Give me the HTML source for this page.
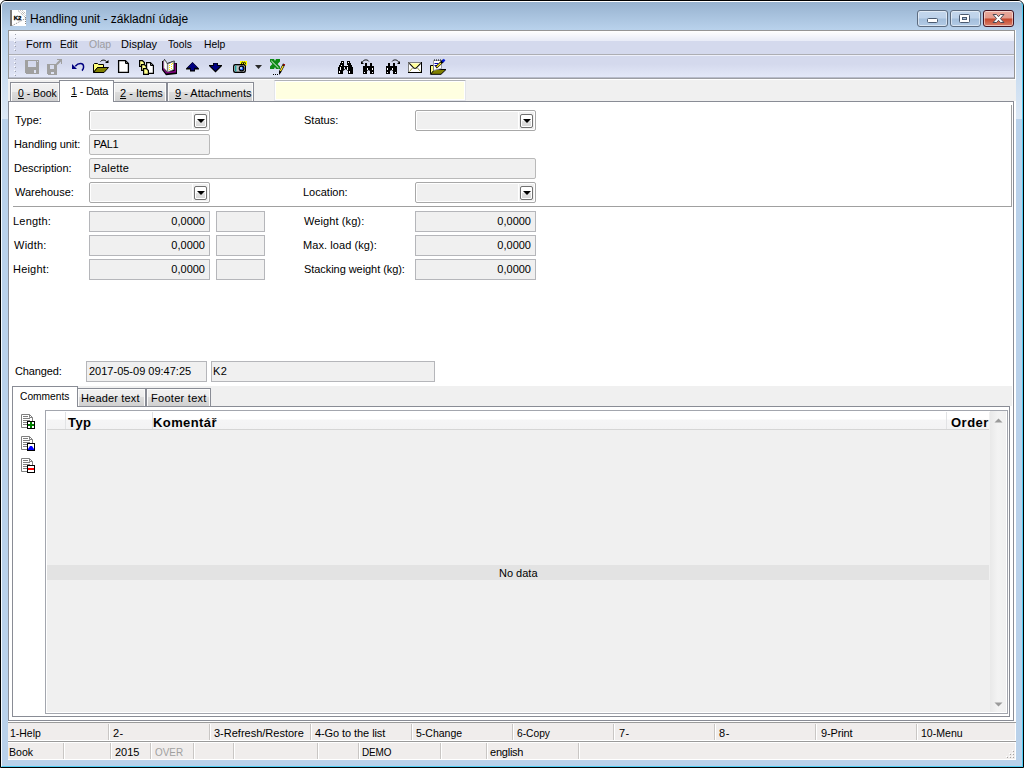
<!DOCTYPE html>
<html lang="en">
<head>
<meta charset="utf-8">
<title>Handling unit - základní údaje</title>
<style>
html,body{margin:0;padding:0;background:#fff;}
body{width:1024px;height:768px;overflow:hidden;position:relative;font-family:"Liberation Sans",sans-serif;font-size:11px;color:#000;}
.a{position:absolute;box-sizing:border-box;}
.t{position:absolute;white-space:nowrap;line-height:13px;height:13px;}
svg{position:absolute;overflow:visible;}
/* window frame */
#win{left:0;top:0;width:1024px;height:768px;background:linear-gradient(#97b2cf 0,#97b2cf 1px,#b9d2ec 29px,#dce8f5 118px,#b9d1ea 118px);border:1px solid #000;border-radius:6px 6px 0 0;}
#cap{left:1px;top:1px;width:1022px;height:29px;background:none;border-radius:5px 5px 0 0;}
#hl{left:1px;top:1px;width:1022px;height:766px;border-top:1px solid #fff;border-left:1px solid #f4f9fd;border-right:1px solid #4fcdf3;border-bottom:1px solid #4fcdf3;border-radius:5px 5px 0 0;}
#title{left:30px;top:12px;font-size:12px;line-height:15px;height:15px;}
/* caption buttons */
.cb{top:10px;width:31px;height:17px;border:1px solid #5d6c80;border-radius:3px;box-shadow:inset 0 0 0 1px rgba(255,255,255,.5);background:linear-gradient(#c3d6ec 0,#bdd2ea 48%,#a3bedb 52%,#b3cbe6 100%);}
#bx{border-color:#431422;background:linear-gradient(#e9a99c 0,#e29a8b 48%,#c5452a 52%,#d8806b 100%);}
/* client */
#client{left:8px;top:30px;width:1008px;height:730px;background:#fff;}
#dock{left:8px;top:30px;width:1007px;height:49px;border:1px solid #959595;border-bottom:none;}
#menu{left:9px;top:31px;width:1005px;height:23px;background:linear-gradient(#fff 0,#e8ebf7 10px,#d4d9ed 10px);}
#mline{left:9px;top:54px;width:1005px;height:1px;background:#adaeb3;}
#tbar{left:9px;top:55px;width:1005px;height:24px;background:linear-gradient(#eef0fa 0,#eef0fa 1px,#d4d9ed 1px,#d4d9ed 9px,#e3e8f8 22px,#b8bccb 22px,#b8bccb 23px,#9c9ea3 23px);}
.mi{top:38px;}
/* tabs */
#strip{left:8px;top:80px;width:1008px;height:21px;background:#f0f0f0;}
.tab{border:1px solid #898c95;border-bottom:none;background:linear-gradient(#f2f2f2 0,#ececec 50%,#dddddd 50%,#d0d0d0 100%);box-shadow:inset 1px 0 #fbfbfb,inset -1px 0 #fbfbfb,inset 0 1px #fbfbfb;}
.tabsel{background:#fff;border:1px solid #898c95;border-bottom:none;}
#page{left:8px;top:101px;width:1006px;height:620px;border:1px solid #898c95;background:#fff;}
/* fields */
.cmb{border:1px solid #a8a8a8;border-radius:2px;background:#fff;height:21px;}
.cmb i{position:absolute;left:1px;top:1px;bottom:1px;right:17px;background:#f0f0f0;}
.cmb b{position:absolute;right:1px;top:1px;bottom:1px;width:15px;background:#f0f0f0;}
.cmb u{position:absolute;right:2px;top:3px;width:13px;height:14px;border:1px solid #707070;border-radius:2px;box-sizing:border-box;background:linear-gradient(#fff 0,#fff 45%,#e3e3e3 50%,#d6d6d6 100%);box-shadow:inset 0 0 0 1px #fff;}
.cmb u:after{content:"";position:absolute;left:2px;top:4px;border-left:4px solid transparent;border-right:4px solid transparent;border-top:4px solid #000;width:0;height:0;}
.ed{border:1px solid #b5b6ba;background:#f0f0f0;height:21px;line-height:19px;padding:0 4px;white-space:nowrap;}
.r{text-align:right;}
.st{background:#f0edec;}
</style>
</head>
<body>
<div id="win" class="a"></div>
<div id="cap" class="a"></div>
<div id="hl" class="a"></div>
<div id="title" class="t">Handling unit - základní údaje</div>
<div id="bm" class="a cb" style="left:917px"></div>
<div id="bo" class="a cb" style="left:950px"></div>
<div id="bx" class="a cb" style="left:983px"></div>
<div id="client" class="a"></div>
<div id="dock" class="a"></div>
<div id="menu" class="a"></div>
<div id="mline" class="a"></div>
<div id="tbar" class="a"></div>
<div class="t mi" style="left:26px">Form</div>
<div class="t mi" style="left:60px;transform:scaleX(0.93);transform-origin:0 0">Edit</div>
<div class="t mi" style="left:89px;color:#9d9da1;transform:scaleX(0.95);transform-origin:0 0">Olap</div>
<div class="t mi" style="left:121px">Display</div>
<div class="t mi" style="left:168px;transform:scaleX(0.93);transform-origin:0 0">Tools</div>
<div class="t mi" style="left:204px;transform:scaleX(0.94);transform-origin:0 0">Help</div>
<!-- TOOLBAR ICONS -->
<svg id="tbicons" style="left:0;top:0" width="1024" height="100" viewBox="0 0 1024 100">
<g id="grip" fill="#fff"><rect x="14" y="33" width="1" height="1"/><rect x="14" y="37" width="1" height="1"/><rect x="14" y="41" width="1" height="1"/><rect x="14" y="45" width="1" height="1"/><rect x="14" y="49" width="1" height="1"/><rect x="14" y="58" width="1" height="1"/><rect x="14" y="62" width="1" height="1"/><rect x="14" y="66" width="1" height="1"/><rect x="14" y="70" width="1" height="1"/><rect x="14" y="74" width="1" height="1"/></g>
<g fill="#9fa1ac"><rect x="15" y="34" width="1" height="1"/><rect x="15" y="38" width="1" height="1"/><rect x="15" y="42" width="1" height="1"/><rect x="15" y="46" width="1" height="1"/><rect x="15" y="50" width="1" height="1"/><rect x="15" y="59" width="1" height="1"/><rect x="15" y="63" width="1" height="1"/><rect x="15" y="67" width="1" height="1"/><rect x="15" y="71" width="1" height="1"/><rect x="15" y="75" width="1" height="1"/></g>
<!-- save (disabled) -->
<path shape-rendering="crispEdges" fill="#a0a0a0" fill-rule="evenodd" d="M25 60H39V74H26L25 73Z M28 61H36V67H28Z M34 70H36V73H34Z M37 61H38V62H37Z"/>
<!-- save as (disabled) -->
<path shape-rendering="crispEdges" fill="#a0a0a0" fill-rule="evenodd" d="M47 64H57V75H48L47 74Z M50 65H54V69H50Z M51 72H54V74H51Z"/>
<path fill="#a0a0a0" d="M57 59H62V64H61V61.5L57.5 65L56 63.5L59.5 60H57Z"/>
<!-- undo -->
<path fill="#000080" d="M72 64L77 69H72Z"/>
<path fill="none" stroke="#000080" stroke-width="1.5" d="M75.3 66.3C77 64.3 78.8 63.6 80.5 63.6C82.6 63.6 83.6 65.2 83.6 67C83.6 68.6 83 69.6 82 70.6"/>
<!-- open -->
<path fill="#ffff7a" stroke="#000" d="M93.5 72.5V64.5L94.5 63.5H97.5L98.5 64.5H103.5V67.5H97.5L93.5 72.5Z"/>
<path fill="#808000" stroke="#000" d="M93.5 72.5L97.5 67.5H108.5L104 72.5Z"/>
<path fill="none" stroke="#000" d="M100.5 61.5C102 59.6 105.5 59.4 107 62.5"/><path fill="#000" d="M105 63H108.5V60Z"/>
<!-- new -->
<path fill="#fff" stroke="#000" stroke-width="1.3" d="M118.6 60.6H125.4L128.4 63.6V72.4H118.6Z"/><path fill="none" stroke="#000" d="M125.5 60.5V63.5H128.5"/>
<!-- copy -->
<path fill="#fff" stroke="#000" stroke-width="1.2" d="M146.6 62.6H150.4L153.4 65.6V73.4H146.6Z"/><path fill="none" stroke="#000" d="M150.5 62.5V65.5H153.5"/>
<path fill="#ffff8c" stroke="#000" stroke-width="1.2" d="M139.6 60.6H142.4L144.4 62.6V66.4H139.6Z"/>
<path fill="#ffff8c" stroke="#000" stroke-width="1.2" d="M141.6 64.6H144.4L146.4 66.6V70.4H141.6Z"/>
<path fill="#ffff8c" stroke="#000" stroke-width="1.2" d="M143.6 68.6H146.4L148.4 70.6V74.4H143.6Z"/>
<!-- book -->
<path fill="#000" d="M162 61H163.2L164.6 59L167.4 63L173.4 60.8H174.6V63H177V74L166 75.2L162 70Z"/>
<path fill="#800080" d="M163 61.6V69.2L166.2 73.4L176 72.4V63.6H174.6V71L166.6 72L164 68.6V61.6Z"/>
<path fill="#fff" stroke="#8c8c8c" stroke-width=".7" d="M163.8 61.4L164.7 60L167.3 64V71.8L163.8 68Z"/>
<path fill="#fff" stroke="#8c8c8c" stroke-width=".7" d="M167.9 63.9L173.6 61.6V69.6L167.9 71.8Z"/>
<g fill="#ffe800"><rect x="169" y="65" width="1" height="1"/><rect x="171" y="64" width="1" height="1"/><rect x="169" y="67" width="1" height="1"/><rect x="171" y="66" width="1" height="1"/><rect x="169" y="69" width="1" height="1"/><rect x="171" y="68" width="1" height="1"/><rect x="172" y="63" width="1" height="1"/></g>
<!-- up -->
<path fill="#000" d="M192.5 62L199 68.5V69.5H195V71.5H190V69.5H186V68.5Z"/><path fill="#000080" d="M192.5 62.6L197.6 67.8H194.2V70.3H190.8V67.8H187.4Z"/>
<!-- down -->
<path fill="#000" d="M213 63H218V65H222V66L215.5 72.4L209 66V65H213Z"/><path fill="#000080" d="M213.8 63.6H217.2V66H220.3L215.5 70.8L210.7 66H213.8Z"/>
<!-- camera -->
<rect x="240" y="61" width="7" height="4.5" fill="#ffff00"/><path stroke="#000" fill="none" d="M241.5 64C241.5 61.5 243.5 61.5 243.5 64M243.5 64C243.5 61.5 245.5 61.5 245.5 64"/>
<rect x="233.7" y="64.7" width="11.6" height="7.6" rx="1.5" fill="#fff" stroke="#000" stroke-width="1.4"/><rect x="235" y="65.5" width="1.6" height="6" fill="#1d9a9a"/><rect x="237" y="66" width="2" height="5" fill="#bdbdbd"/>
<circle cx="241.6" cy="68.5" r="2.3" fill="#1a5cff" stroke="#000" stroke-width="1.2"/><circle cx="241" cy="67.9" r="1" fill="#dff6ff"/>
<!-- dropdown -->
<path fill="#2a2a2a" d="M255 65H262L258.5 69Z"/>
<!-- excel + pencil -->
<path fill="#0d8a16" d="M270 59H274L275 61L276 59H280V61.5L277.6 64L280 66.5V69H276L275 67L274 69H270V66.5L272.4 64L270 61.5Z"/><path stroke="#fff" stroke-width=".9" d="M271.3 60.8L278.6 68"/>
<path fill="#000" d="M283 63.5L285.2 64.6L281 72.5L279 75V71.3Z"/><path stroke="#ffe920" stroke-width="1.3" d="M283.2 65.8L280.4 71"/><rect x="283.4" y="64" width="1.4" height="1.3" fill="#d00000"/>
<g fill="#000"><rect x="273" y="74" width="1" height="1"/><rect x="275" y="74" width="1" height="1"/><rect x="277" y="74" width="1" height="1"/></g>
<!-- binoculars 1 -->
<path fill="#000" d="M341 61H344V63H345V66H346V61H347V63H347V61H350V63H351V65H352V67H353V74H348V71L345.5 69L343 71V74H338V67H339V65H340V63H341Z"/>
<g fill="#fff"><rect x="342" y="62" width="1" height="1"/><rect x="348" y="62" width="1" height="1"/><rect x="341" y="65" width="1" height="1"/><rect x="347" y="65" width="1" height="1"/><rect x="340" y="67" width="1" height="3"/><rect x="347" y="67" width="1" height="3"/><rect x="344" y="67" width="1" height="2" fill="#d9ddf0"/><rect x="339" y="71" width="1" height="2"/><rect x="349" y="71" width="1" height="2"/></g>
<rect x="344" y="61" width="3" height="5" fill="#d6dbee"/>
<!-- binoculars 2 -->
<path fill="#000" d="M365 63H367V66H370V63H372V66H374V74H370V71L368.5 70L367 71V74H363V66H365Z"/>
<g fill="#fff"><rect x="367" y="68" width="1" height="2"/><rect x="372" y="68" width="1" height="2"/><rect x="364" y="72" width="1" height="1"/><rect x="372" y="72" width="1" height="1"/></g>
<path fill="none" stroke="#000" d="M362.3 62.5C363 59.4 367.6 59.2 368.8 61.4"/><path fill="#000" d="M361 61V64H364Z"/>
<!-- binoculars 3 -->
<path fill="#000" d="M388 63H390V66H393V63H395V66H397V74H393V71L391.5 70L390 71V74H386V66H388Z"/>
<g fill="#fff"><rect x="387" y="68" width="1" height="2"/><rect x="392" y="68" width="1" height="2"/><rect x="387" y="72" width="1" height="1"/><rect x="395" y="72" width="1" height="1"/></g>
<path fill="none" stroke="#000" d="M392.2 61.4C393.4 59.2 398 59.4 398.7 62.5"/><path fill="#000" d="M400 61V64H397Z"/>
<!-- envelope -->
<rect x="408.5" y="62.5" width="13" height="10" fill="#fff" stroke="#000"/><path fill="none" stroke="#808080" d="M408.5 72V62.5H421"/>
<path fill="#ffff9a" d="M409.5 63.5H420.5L415 68.8Z"/><path fill="none" stroke="#000" stroke-width="1.1" d="M409.3 63.3L414 68.3H416L420.7 63.3"/><path fill="none" stroke="#808000" stroke-width=".8" d="M409.5 71.5L412.5 68M420.5 71.5L417.5 68"/>
<!-- note -->
<path fill="#ffff8a" stroke="#000" d="M430.5 73.5V65.5H433.5V73.5Z"/><path fill="#808000" stroke="#000" d="M430.5 74.3L434.5 69.5H446L441 74.3Z"/>
<path fill="#fff" stroke="#8a8a8a" stroke-width=".8" d="M433.5 60.5H441.5V68.5L433.5 70.5Z"/><path stroke="#000" stroke-dasharray="1 1" d="M434 60H442"/><path stroke="#0000b0" d="M434.5 63.5H438M434.5 65.5H437"/>
<path stroke="#000" stroke-width="2.6" d="M443.5 60.5L436 67.5"/><path stroke="#ffea20" stroke-width="1.2" d="M441 63L436.6 67"/><path stroke="#0018d8" stroke-width="2.2" d="M444.6 59.6L442.4 61.8"/>
</svg>
<!-- TABS -->
<div id="strip" class="a"></div>
<div id="page" class="a"></div>
<div class="a tab" style="left:10px;top:82px;width:50px;height:19px"></div>
<div class="a tab" style="left:113px;top:82px;width:54px;height:19px"></div>
<div class="a tab" style="left:167px;top:82px;width:87px;height:19px"></div>
<div class="a tabsel" style="left:59px;top:80px;width:55px;height:22px"></div>
<div class="t" style="left:18px;top:87px;transform:scaleX(.945);transform-origin:0 0"><u>0</u> - Book</div>
<div class="t" style="left:71px;top:85px;letter-spacing:-0.25px"><u>1</u> - Data</div>
<div class="t" style="left:120px;top:87px"><u>2</u> - Items</div>
<div class="t" style="left:175px;top:87px"><u>9</u> - Attachments</div>
<div class="a" style="left:274px;top:80px;width:192px;height:21px;border:1px solid #e3e5ea;border-top-color:#b0b2b8;background:#ffffe1;box-shadow:inset 0 0 0 1px #fff;border-radius:1px"></div>
<!-- FORM -->
<div class="a" style="left:13px;top:105px;width:999px;height:102px;border-right:1px solid #a0a0a0;border-bottom:1px solid #a0a0a0"></div>
<div class="t" style="left:15px;top:114px">Type:</div>
<div class="t" style="left:14px;top:138px;letter-spacing:-0.08px">Handling unit:</div>
<div class="t" style="left:14px;top:162px;letter-spacing:-0.05px">Description:</div>
<div class="t" style="left:15px;top:186px">Warehouse:</div>
<div class="t" style="left:13px;top:215px;letter-spacing:0.2px">Length:</div>
<div class="t" style="left:14px;top:239px;letter-spacing:0.25px">Width:</div>
<div class="t" style="left:13px;top:263px;letter-spacing:0.2px">Height:</div>
<div class="t" style="left:304px;top:114px">Status:</div>
<div class="t" style="left:303px;top:186px">Location:</div>
<div class="t" style="left:304px;top:215px;letter-spacing:0.1px">Weight (kg):</div>
<div class="t" style="left:303px;top:239px;letter-spacing:0.07px">Max. load (kg):</div>
<div class="t" style="left:304px;top:263px;letter-spacing:-0.06px">Stacking weight (kg):</div>
<div class="t" style="left:15px;top:365px;letter-spacing:-0.14px">Changed:</div>
<div class="a cmb" style="left:89px;top:110px;width:121px"><i></i><b></b><u></u></div>
<div class="a cmb" style="left:415px;top:110px;width:121px"><i></i><b></b><u></u></div>
<div class="a cmb" style="left:89px;top:182px;width:121px"><i></i><b></b><u></u></div>
<div class="a cmb" style="left:415px;top:182px;width:121px"><i></i><b></b><u></u></div>
<div class="a ed" style="left:89px;top:134px;width:121px;border-radius:2px;border-color:#b9b9b9;padding-left:3.5px;letter-spacing:-0.3px">PAL1</div>
<div class="a ed" style="left:89px;top:158px;width:447px;border-radius:2px;border-color:#b9b9b9;padding-left:3.5px;letter-spacing:0.17px">Palette</div>
<div class="a ed r" style="left:89px;top:211px;width:121px">0,0000</div>
<div class="a ed r" style="left:89px;top:235px;width:121px">0,0000</div>
<div class="a ed r" style="left:89px;top:259px;width:121px">0,0000</div>
<div class="a ed" style="left:216px;top:211px;width:49px"></div>
<div class="a ed" style="left:216px;top:235px;width:49px"></div>
<div class="a ed" style="left:216px;top:259px;width:49px"></div>
<div class="a ed r" style="left:415px;top:211px;width:121px">0,0000</div>
<div class="a ed r" style="left:415px;top:235px;width:121px">0,0000</div>
<div class="a ed r" style="left:415px;top:259px;width:121px">0,0000</div>
<div class="a ed" style="left:86px;top:361px;width:121px;padding:0 2px">2017-05-09 09:47:25</div>
<div class="a ed" style="left:211px;top:361px;width:224px;padding:0 1px;letter-spacing:0.4px">K2</div>
<!-- INNER TABS -->
<div class="a" style="left:12px;top:386px;width:1000px;height:20px;background:#f0f0f0"></div>
<div class="a" style="left:12px;top:406px;width:998px;height:311px;border:1px solid #898c95;background:#fff"></div>
<div class="a tab" style="left:77px;top:388px;width:69px;height:18px"></div>
<div class="a tab" style="left:146px;top:388px;width:65px;height:18px"></div>
<div class="a tabsel" style="left:12px;top:386px;width:66px;height:21px"></div>
<div class="t" style="left:20px;top:390px;transform:scaleX(0.93);transform-origin:0 0">Comments</div>
<div class="t" style="left:81px;top:392px;letter-spacing:0.17px">Header text</div>
<div class="t" style="left:151px;top:392px;letter-spacing:0.28px">Footer text</div>
<!-- GRID -->
<div class="a" style="left:45px;top:410px;width:963px;height:304px;border:1px solid #a3a6ae;background:#f0f0f0;box-shadow:inset 0 0 0 1px #fff"></div>
<div class="a" style="left:47px;top:411px;width:942px;height:19px;background:linear-gradient(#fff 0,#fff 45%,#f5f5f6 50%,#f3f3f4 100%);border-bottom:1px solid #d5d5d5"></div>
<div class="a" style="left:65px;top:412px;width:1px;height:17px;background:#e2e3e5"></div>
<div class="a" style="left:152px;top:412px;width:1px;height:17px;background:#e2e3e5"></div>
<div class="a" style="left:946px;top:412px;width:1px;height:17px;background:#e2e3e5"></div>
<div class="t" style="left:68px;top:415px;font-size:13px;font-weight:bold;line-height:15px;height:15px;letter-spacing:0.45px">Typ</div>
<div class="t" style="left:153px;top:415px;font-size:13px;font-weight:bold;line-height:15px;height:15px;letter-spacing:0.4px">Komentář</div>
<div class="t" style="left:951px;top:415px;font-size:13px;font-weight:bold;line-height:15px;height:15px;width:38px;overflow:hidden;letter-spacing:0.5px">Order</div>
<div class="a" style="left:47px;top:565px;width:942px;height:15px;background:#e3e3e3"></div>
<div class="t" style="left:499px;top:567px">No data</div>
<div class="a" style="left:990px;top:411px;width:16px;height:301px;background:linear-gradient(90deg,#e9e9e9,#f3f3f3 50%,#f0f0f0)"></div>
<svg style="left:994px;top:418px" width="9" height="5" viewBox="0 0 9 5"><path d="M0.5 4.5 L4.5 0.5 L8.5 4.5 Z" fill="#9a9a9a"/></svg>
<svg style="left:994px;top:702px" width="9" height="5" viewBox="0 0 9 5"><path d="M0.5 0.5 L4.5 4.5 L8.5 0.5 Z" fill="#9a9a9a"/></svg>
<!-- SIDE ICONS -->
<svg style="left:0;top:0" width="60" height="480" viewBox="0 0 60 480">
<path fill="#fff" stroke="#808080" d="M21.5 414.5H29.5L32.5 417.5V427.5H21.5Z"/><path fill="none" stroke="#808080" d="M29.5 414.5V417.5H32.5"/><path stroke="#808080" d="M23 416.5H28M23 418.5H30M23 420.5H30M23 422.5H27M23 424.5H27"/><rect x="27.5" y="421.5" width="7" height="7" fill="#fff" stroke="#000"/><path fill="#008000" d="M30 422H32V424H34V426H32V428H30V426H28V424H30Z"/>
<path fill="#fff" stroke="#808080" d="M21.5 436.5H29.5L32.5 439.5V449.5H21.5Z"/><path fill="none" stroke="#808080" d="M29.5 436.5V439.5H32.5"/><path stroke="#808080" d="M23 438.5H28M23 440.5H30M23 442.5H30M23 444.5H27M23 446.5H27"/><rect x="27.5" y="443.5" width="7" height="7" fill="#fff" stroke="#000"/><path fill="#0000ff" d="M28 450V449L30 446H32L34 449V450Z"/>
<path fill="#fff" stroke="#808080" d="M21.5 458.5H29.5L32.5 461.5V471.5H21.5Z"/><path fill="none" stroke="#808080" d="M29.5 458.5V461.5H32.5"/><path stroke="#808080" d="M23 460.5H28M23 462.5H30M23 464.5H30M23 466.5H27M23 468.5H27"/><rect x="27.5" y="465.5" width="7" height="7" fill="#fff" stroke="#000"/><rect x="28" y="468" width="6" height="2" fill="#ff0000"/>
</svg>
<!-- STATUS BARS -->
<div class="a" style="left:8px;top:722px;width:1008px;height:1px;background:#9a9a9a"></div>
<div class="a st" style="left:8px;top:723px;width:1007px;height:17px"></div>
<div class="a" style="left:8px;top:741px;width:1008px;height:1px;background:#9a9a9a"></div>
<div class="a st" style="left:8px;top:743px;width:1007px;height:16px"></div>
<div class="t" style="left:10px;top:727px;transform:scaleX(0.95);transform-origin:0 0">1-Help</div>
<div class="t" style="left:113px;top:727px;letter-spacing:0.5px">2-</div>
<div class="t" style="left:214px;top:727px">3-Refresh/Restore</div>
<div class="t" style="left:315px;top:727px;letter-spacing:-0.08px">4-Go to the list</div>
<div class="t" style="left:416px;top:727px;transform:scaleX(0.954);transform-origin:0 0">5-Change</div>
<div class="t" style="left:517px;top:727px;transform:scaleX(0.93);transform-origin:0 0">6-Copy</div>
<div class="t" style="left:619px;top:727px;letter-spacing:0.4px">7-</div>
<div class="t" style="left:719px;top:727px;letter-spacing:0.6px">8-</div>
<div class="t" style="left:821px;top:727px;letter-spacing:-0.15px">9-Print</div>
<div class="t" style="left:921px;top:727px;transform:scaleX(0.96);transform-origin:0 0">10-Menu</div>
<div class="t" style="left:9px;top:746px;transform:scaleX(0.96);transform-origin:0 0">Book</div>
<div class="t" style="left:115px;top:746px">2015</div>
<div class="t" style="left:155px;top:746px;color:#a0a0a0;transform:scaleX(.9);transform-origin:0 0">OVER</div>
<div class="t" style="left:362px;top:746px;transform:scaleX(.9);transform-origin:0 0;letter-spacing:-0.1px">DEMO</div>
<div class="t" style="left:490px;top:746px;letter-spacing:-0.23px">english</div>
<!-- CAPTION GLYPHS -->
<svg style="left:0;top:0" width="1024" height="30" viewBox="0 0 1024 30">
<rect x="10" y="10" width="16" height="16" fill="#fff"/><rect x="10" y="10" width="2" height="16" fill="#777"/>
<path stroke="#555" stroke-width=".7" stroke-dasharray="1 1" fill="none" d="M18 10.5L25.5 17.5M20.5 10.5L25.5 15.5M22.5 10.5L25.5 13.5M12.5 25.5L25.5 18.5M25.500 17V24"/>
<text x="13.7" y="20" font-family="Liberation Sans, sans-serif" font-weight="bold" font-size="6" letter-spacing="0.1" fill="#000" stroke="#000" stroke-width=".3">K2</text>
<rect x="927.5" y="18.5" width="10" height="4" rx="1" fill="#fff" stroke="#4a5a70"/>
<rect x="959.5" y="14.5" width="10" height="8" rx="1" fill="#fff" stroke="#4a5a70"/><rect x="962.5" y="17.5" width="4" height="2" fill="#a9c0dc" stroke="#4a5a70"/>
<path fill="#fff" stroke="#4d4a55" stroke-width="1" stroke-linejoin="round" d="M993 14.5H996.5L998.5 16.7L1000.500 14.500H1004L1000.400 18.600L1004 22.500H1000.500L998.500 20.300L996.500 22.500H993L996.600 18.600Z"/>
</svg>
<!-- STATUS DIVIDERS -->
<svg style="left:0;top:716px" width="1024" height="52" viewBox="0 716 1024 52" shape-rendering="crispEdges">
<g fill="#c9c6c4"><rect x="108" y="724" width="1" height="16"/><rect x="209" y="724" width="1" height="16"/><rect x="310" y="724" width="1" height="16"/><rect x="411" y="724" width="1" height="16"/><rect x="512" y="724" width="1" height="16"/><rect x="613" y="724" width="1" height="16"/><rect x="714" y="724" width="1" height="16"/><rect x="815" y="724" width="1" height="16"/><rect x="916" y="724" width="1" height="16"/><rect x="63" y="743" width="1" height="16"/><rect x="110" y="743" width="1" height="16"/><rect x="150" y="743" width="1" height="16"/><rect x="193" y="743" width="1" height="16"/><rect x="233" y="743" width="1" height="16"/><rect x="317" y="743" width="1" height="16"/><rect x="358" y="743" width="1" height="16"/><rect x="440" y="743" width="1" height="16"/><rect x="486" y="743" width="1" height="16"/><rect x="578" y="743" width="1" height="16"/></g>
<g fill="#fff"><rect x="109" y="724" width="1" height="16"/><rect x="210" y="724" width="1" height="16"/><rect x="311" y="724" width="1" height="16"/><rect x="412" y="724" width="1" height="16"/><rect x="513" y="724" width="1" height="16"/><rect x="614" y="724" width="1" height="16"/><rect x="715" y="724" width="1" height="16"/><rect x="816" y="724" width="1" height="16"/><rect x="917" y="724" width="1" height="16"/><rect x="64" y="743" width="1" height="16"/><rect x="111" y="743" width="1" height="16"/><rect x="151" y="743" width="1" height="16"/><rect x="194" y="743" width="1" height="16"/><rect x="234" y="743" width="1" height="16"/><rect x="318" y="743" width="1" height="16"/><rect x="359" y="743" width="1" height="16"/><rect x="441" y="743" width="1" height="16"/><rect x="487" y="743" width="1" height="16"/><rect x="579" y="743" width="1" height="16"/></g>
<g fill="#fff"><rect x="1012" y="750" width="1" height="1"/><rect x="1009" y="753" width="1" height="1"/><rect x="1012" y="753" width="1" height="1"/><rect x="1006" y="756" width="1" height="1"/><rect x="1009" y="756" width="1" height="1"/><rect x="1012" y="756" width="1" height="1"/></g>
<g fill="#a5a2a0"><rect x="1013" y="751" width="1" height="1"/><rect x="1010" y="754" width="1" height="1"/><rect x="1013" y="754" width="1" height="1"/><rect x="1007" y="757" width="1" height="1"/><rect x="1010" y="757" width="1" height="1"/><rect x="1013" y="757" width="1" height="1"/></g>
</svg>
</body>
</html>
